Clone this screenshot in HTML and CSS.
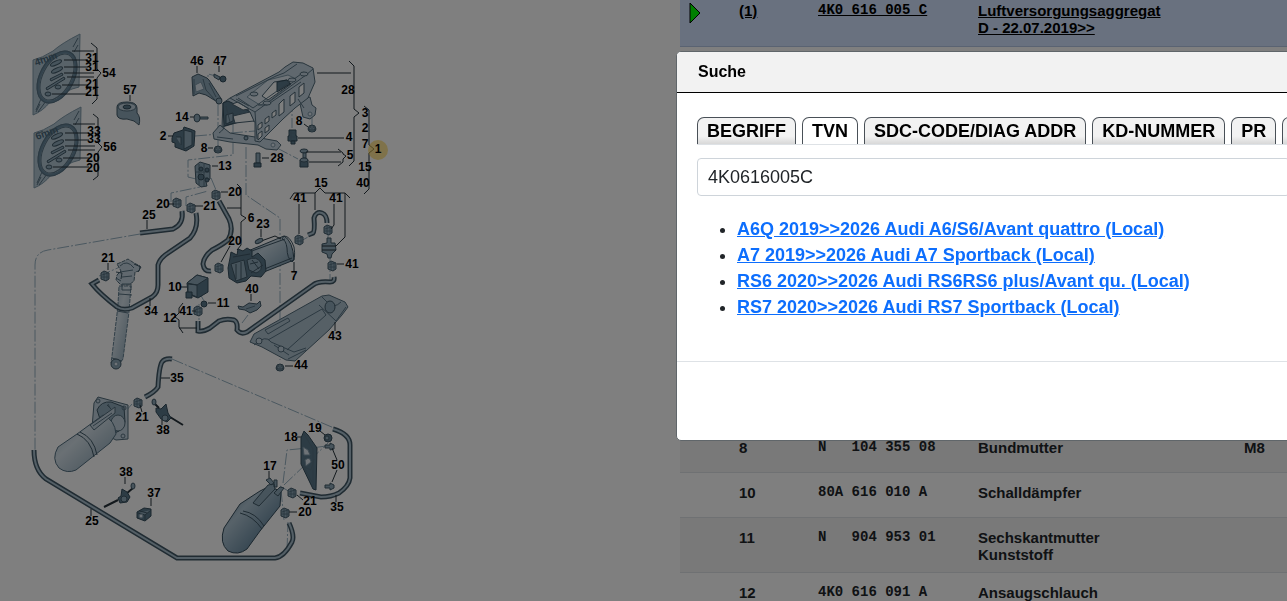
FILE: index.html
```html
<!DOCTYPE html>
<html lang="de">
<head>
<meta charset="utf-8">
<title>Teilekatalog</title>
<link rel="stylesheet" href="styles.css">
</head>
<body>
<main class="catalog">
<section class="drawing" aria-label="Teilezeichnung">
<svg class="parts" viewBox="0 0 680 601" role="img" aria-label="Luftversorgung">
<defs>
<linearGradient id="cyl" x1="0" y1="0" x2="1" y2="1"><stop offset="0" stop-color="#7793a5"/><stop offset=".35" stop-color="#c3d4df"/><stop offset=".65" stop-color="#9cb4c4"/><stop offset="1" stop-color="#5d7a8d"/></linearGradient>
<linearGradient id="tank" x1="0" y1="0" x2="1" y2="1"><stop offset="0" stop-color="#9db4c3"/><stop offset=".4" stop-color="#d5e1e9"/><stop offset="1" stop-color="#7f9bad"/></linearGradient>
<linearGradient id="darktank" x1="0" y1="0" x2="1" y2="1"><stop offset="0" stop-color="#5d7a8d"/><stop offset=".35" stop-color="#afc5d3"/><stop offset=".7" stop-color="#6f8fa5"/><stop offset="1" stop-color="#4a677a"/></linearGradient>
<g id="clip"><path d="M-4-3L-1-5L4-3L4 3L1 5L-4 3Z" class="mid"/><path d="M-3-1L3-3M-4 1L4 1M-1-5V4M2-4V4" class="thin"/></g>
<g id="nut"><ellipse cx="0" cy="1" rx="4" ry="3" class="mid"/><path d="M-3-2L0-3L3-2V2H-3Z" class="mid"/><ellipse cx="0" cy="-1" rx="2" ry="1" class="light"/></g>
<g id="bag">
<path d="M33 60Q42 58 53 51Q62 43 80 34L79 87Q65 90 50 102Q43 111 33 115Z" class="foil"/>
<path d="M73 47L78 38M74 52L78 45M36 110L41 99M38 112L46 101M40 104L36 112M38 60L42 58" class="thin"/>
<ellipse cx="57" cy="77" rx="16" ry="27" transform="rotate(28 57 77)" class="ring"/>
<ellipse cx="57" cy="77" rx="17" ry="28" transform="rotate(28 57 77)" class="thin"/>
<ellipse cx="57" cy="77" rx="14" ry="25" transform="rotate(28 57 77)" class="thin"/>
<g class="mid"><ellipse cx="56" cy="63" rx="6" ry="2" transform="rotate(-25 56 63)"/><ellipse cx="57" cy="70" rx="6" ry="2" transform="rotate(-25 57 70)"/><path d="M50 79L62 73L63 75L51 81ZM46 88L64 77L65 79L47 90Z"/><ellipse cx="58" cy="87" rx="3" ry="2"/><ellipse cx="48" cy="94" rx="3" ry="2"/></g>
<path d="M72 51H94M64 60H88M64 67H88M64 73H94M67 77H94M62 85H88M52 94H88" class="line"/>
</g>
<g id="hoses">
<path d="M140 233L173 229Q184 224 182 211"/>
<path d="M99 280L92 284Q100 294 117 307Q123 311 132 308L152 297Q158 293 158 285L158 265Q160 258 168 253L190 238Q199 228 196 213"/>
<path d="M219 201L229 219Q234 230 228 240Q222 245 212 250Q204 256 203 264Q204 272 211 271"/>
<path d="M308 235L313 233Q315 231 314 218Q316 211 322 213Q327 215 327 223"/>
<path d="M198 321V331Q203 332 210 328L219 321Q226 318 234 320Q238 322 237 330Q241 335 247 332L313 285Q318 281 330 282Q335 282 334 277"/>
<path d="M172 359Q165 358 162 362Q159 367 158 387Q155 392 145 397"/>
<path d="M34 450Q34 470 46 479L177 558H275Q284 557 292 542Q295 536 289 523"/>
<path d="M300 493L321 497Q331 497 339 493Q349 486 350 478V445Q350 434 333 429"/>
</g>
</defs>

<g class="guide">
<path d="M140 234L48 250Q35 252 35 265V450M172 359L334 428M218 104V150M222 117H233V155L188 160V177L204 181M195 136L255 131M246 147V195L280 218V360M171 202V193L200 187M186 206V197L208 191M211 178L216 190M277 148L298 159M292 100V128M312 113V126M228 268H235M297 243L310 236M328 227V238M330 256V283M198 290L204 301M199 304V320M248 315L242 323M99 276L120 267M132 404L125 412M287 550L288 522M281 490L284 520M280 486L290 492M284 485L328 443M283 483L287 450L308 448M312 448L326 446M208 91V74L216 76"/>
</g>

<use href="#bag"/>
<use href="#bag" x="1" y="73"/>
<text class="bagtext" transform="translate(36 66) rotate(-20)">4mm</text>
<text class="bagtext" transform="translate(37 140) rotate(-20)">6mm</text>

<!-- tape roll -->
<path d="M117 107Q117 102 127 102Q137 102 137 108V113Q141 117 139 125Q135 120 127 119Q118 120 117 115Z" class="mid"/>
<ellipse cx="127" cy="107" rx="9" ry="4" class="light"/><ellipse cx="127" cy="107" rx="4" ry="2" class="deep"/>

<!-- mount 46, screw 47, screw 14 -->
<path d="M192 77L198 74L207 78L209 80L222 100L219 103L206 95L199 93L193 96Z" class="mid"/>
<path d="M195 85L201 82L204 89L196 92Z" class="pale"/><path d="M203 79L206 90L215 100M194 79V94M209 83L216 97" class="thin"/><ellipse cx="219" cy="101" rx="3" ry="3" class="mid"/>
<path d="M214 74L220 77L219 80L214 77Z" class="mid"/><ellipse cx="223" cy="79" rx="3" ry="3" class="deep"/>
<path d="M200 117H208V119H200Z" class="mid"/><ellipse cx="197" cy="118" rx="3" ry="4" class="mid"/>

<!-- relay 2 -->
<path d="M174 133L183 130L184 127L190 129L195 131L194 146L186 151L175 147V143L172 142V138Z" class="deep"/><path d="M184 130V149L192 145V132ZM176 137H181V145" class="mid"/>

<!-- compressor bracket -->
<path d="M213 133L220 125L230 133L255 137L277 141L281 145L277 150L266 149L258 145L230 142L214 139Z" class="light"/>
<path d="M299 100L310 97L312 105L316 108L315 115L310 119L303 117L301 108Z" class="light"/>
<path d="M223 103L230 98L279 72L285 67L293 62L303 63L313 68L315 82L308 98L295 108L283 119L260 142L255 141V122L250 119L222 127Z" class="light"/>
<path d="M223 103L228 101L249 111L252 118L224 126Z" class="deep"/><path d="M232 104L243 110L249 109L238 102Z" class="void"/><path d="M233 116L250 112L254 121L235 123Z" class="void"/><path d="M226 115L233 113V121L226 124Z" class="mid"/>
<path d="M247 97L268 80L288 75L296 79L291 84L268 102L260 105Z" class="pale"/>
<path d="M262 96L274 82L287 80L291 84L268 100Z" class="void"/><path d="M277 82L287 80L290 84L277 92Z" class="deep"/>
<path d="M230 98L255 112L306 75L313 69M255 112L257 139M238 98L253 108L304 72M236 96L276 76L284 73L297 64M258 105L267 105L301 82" class="thin"/>
<g class="void"><path d="M258 125L262 122V127L258 130ZM258 134L262 131V136L258 140ZM265 119L269 116V121L265 124ZM265 128L269 125V130L265 133ZM272 113L276 110V115L272 118ZM279 104L284 99V112L279 116ZM290 96L295 92V102L290 106ZM299 87L304 83V93L299 97Z"/></g>
<g class="light"><ellipse cx="292" cy="80" rx="4" ry="2"/><ellipse cx="267" cy="103" rx="4" ry="2"/><ellipse cx="254" cy="94" rx="4" ry="2"/><ellipse cx="304" cy="74" rx="4" ry="2"/></g>
<circle cx="246" cy="138" r="2" class="mid"/><circle cx="273" cy="145" r="2" class="pale"/><circle cx="310" cy="114" r="2" class="pale"/>
<path d="M219 133Q225 129 224 125M217 137L233 139M298 99L304 108M226 106L230 122M236 99L249 106" class="thin"/>

<use href="#nut" x="218" y="149"/><use href="#nut" x="312" y="128"/>
<path d="M289 130L296 130V136H297V141H288V136H289Z" class="deep"/><path d="M289 133H296M289 137H296M291 131V142" class="thin"/><path d="M291 141H295V144H291Z" class="deep"/>
<ellipse cx="304" cy="151" rx="4" ry="2" class="mid"/><path d="M303 153H306V158H303Z" class="mid"/><path d="M300 160H308V167H300Z" class="deep"/><ellipse cx="304" cy="160" rx="4" ry="2" class="mid"/>
<path d="M256 153H260V163H256Z" class="mid"/><path d="M254 163H261V167H254Z" class="deep"/>

<!-- valve block 13 -->
<path d="M195 166L200 162L210 165V179L206 182L207 186L201 187L196 183Z" class="mid"/><path d="M199 164V185M204 164V187M196 172H210M199 178H208" class="thin"/><circle cx="201" cy="169" r="2" class="deep"/><circle cx="207" cy="170" r="2" class="deep"/><circle cx="201" cy="177" r="3" class="deep"/><circle cx="207" cy="180" r="2" class="deep"/>
<use href="#clip" x="216" y="195"/><use href="#clip" x="177" y="203"/><use href="#clip" x="191" y="208"/><use href="#clip" x="219" y="268"/><use href="#clip" x="299" y="240"/><use href="#clip" x="328" y="230"/><use href="#clip" x="332" y="266"/><use href="#clip" x="198" y="311"/><use href="#clip" x="105" y="276"/><use href="#clip" x="138" y="403"/><use href="#clip" x="292" y="493"/><use href="#clip" x="285" y="513"/>

<!-- compressor 7 -->
<path d="M248 251L284 236Q293 241 294 260L259 274Z" fill="url(#cyl)" stroke="#344c5b"/>
<path d="M284 236Q290 236 294 247Q296 260 292 262Q287 258 287 248Q286 240 282 239ZM249 252L285 239M262 270L292 258" class="edge"/>
<path d="M230 258L231 252L237 255L238 249L243 251L247 248L252 251L252 257L258 253L265 260L266 271L261 277L251 276L246 281L237 283L229 278L228 268Z" class="deep"/>
<path d="M231 264L244 260L247 277L236 281ZM247 260Q257 255 261 263Q263 271 256 273L249 270ZM233 257L250 254M236 264V279M241 262V280M252 260L259 269M250 264L258 262M251 273L263 265" class="mid"/>
<path d="M258 239Q259 243 264 240L275 236L281 239" class="line"/><ellipse cx="259" cy="241" rx="4" ry="2" transform="rotate(-25 259 241)" class="mid"/>

<!-- filter 15 -->
<path d="M327 238H331V243H335L336 250L332 254L331 258H328L327 254L322 252V244L327 243Z" class="mid"/><path d="M322 246H336M322 250H336" class="line"/>

<!-- box 10 -->
<path d="M187 283L197 275L208 278V292L198 298L188 294Z" class="deep"/><path d="M187 283L197 275L208 278L197 285ZM188 284L197 285V297L188 293Z" class="mid"/><path d="M186 292H192V298H186Z" class="deep"/>
<circle cx="204" cy="304" r="3" class="deep"/>
<path d="M238 306L243 307L249 303L257 304L260 301L261 306L257 310L250 313L245 310L239 309Z" class="mid"/><path d="M246 309L255 306" class="thin"/>

<!-- shield 43 -->
<path d="M250 342L254 334L322 296L329 295L345 302L348 307L342 315L329 330L306 351L295 361L286 360L262 347Z" class="plate"/>
<path d="M254 345Q266 334 271 342L294 352L306 348M265 330L288 318L290 321L268 334ZM268 340L322 309L326 315L287 350M319 305L336 321L346 307M322 297L328 303Q334 309 341 302M274 345L289 355M288 359L306 350" class="thin"/><ellipse cx="330" cy="307" rx="5" ry="6" class="mid"/><circle cx="281" cy="349" r="3" class="light"/><circle cx="259" cy="341" r="3" class="light"/>
<use href="#nut" x="280" y="367"/>

<!-- strut -->
<g stroke-dasharray="4 1"><path d="M119 286H131L129 312L123 359L117 367L111 363L112 356L117 314L118 304Z" fill="url(#tank)" stroke="#637f91"/><path d="M117 264L124 261L128 259L134 263L140 266L139 271L135 272L134 281L129 285H121L116 280L117 275L121 271Z" class="light"/></g><path d="M122 284H131V290H122ZM119 294L132 295M117 311L128 313M120 266Q127 259 134 268M120 272L133 270M122 277L132 276M116 278L121 281M112 358L122 361" class="thin"/><circle cx="116" cy="364" r="5" class="mid"/><circle cx="116" cy="364" r="2" class="pale"/><path d="M134 264L141 267L138 272M116 272L122 273L121 279" class="edge"/>

<use href="#hoses" class="hose-edge"/><use href="#hoses" class="hose-core"/>

<!-- tank at left -->
<path d="M94 403L98 397L128 405V439L116 440L92 428Z" class="light"/><path d="M97 410Q101 401 111 402L124 407L125 422L119 431L106 437Z" class="mid"/><circle cx="98" cy="401" r="2" class="thin"/><circle cx="124" cy="408" r="2" class="thin"/><circle cx="123" cy="436" r="2" class="thin"/>
<ellipse cx="118" cy="423" rx="7" ry="8" class="light"/>
<path d="M58 447L77 434L103 415Q115 420 116 434L110 443L76 470Q67 474 59 468Q51 459 58 447Z" fill="url(#tank)" stroke="#526e80"/><path d="M77 434Q91 440 94 457M80 432Q94 438 97 455" class="edge"/><path d="M90 425L111 410L115 407V413L94 430ZM107 405L111 409" class="light"/><path d="M93 426L112 413M108 404L110 408" class="thin"/>

<!-- tank 17 -->
<path d="M224 528L240 504L260 491L270 486L281 492L280 506L260 531L247 549Q238 556 228 551Q219 543 224 528Z" fill="url(#darktank)" stroke="#344c5b"/><path d="M240 513Q253 516 262 529M243 511Q256 513 264 526" class="edge"/><path d="M253 503L268 485L274 484L275 489L259 506ZM274 493L280 487L284 488L278 496ZM266 480L270 478L274 483L271 485ZM274 480H277V487H274Z" class="mid"/>

<!-- bracket 18 -->
<path d="M301 438L304 431L308 435L317 448L316 490L313 489L301 464Z" class="deep"/><path d="M303 447L308 450L310 455L304 455ZM305 460Q310 456 311 462L306 466Z" class="pale"/><path d="M304 467L311 470L314 459M304 434L313 449V486M303 465L312 482" class="thin"/>
<circle cx="328" cy="438" r="4" class="deep"/><circle cx="327" cy="438" r="2" class="mid"/>
<path d="M325 445H330V443L334 445V449L330 450V448H325ZM325 485H330V483L334 485V488L330 490V488H325Z" class="mid"/>

<!-- sensors 38, connector 37 -->
<path d="M153 402L159 408M170 417L183 425M133 488L126 494M118 500L104 507" class="cable"/><path d="M156 408L161 409L166 404L168 413L171 418L167 422L161 419L156 412ZM122 489L127 492L130 497L127 502L120 503L118 498L121 496Z" class="deep"/><circle cx="165" cy="418" r="3" class="mid"/><circle cx="124" cy="499" r="3" class="mid"/><ellipse cx="154" cy="402" rx="2" ry="3" class="mid"/><ellipse cx="133" cy="486" rx="2" ry="3" class="mid"/>
<path d="M137 512L144 508L151 509V516L145 521L137 518Z" class="deep"/><path d="M138 513L145 515L151 510M145 515V520M140 511L147 513" class="mid"/><circle cx="141" cy="516" r="2" class="pale"/>

<!-- leader lines and brackets -->
<path class="line" d="M91 43L97 48V69L101 73L97 78V99L92 104M93 114L98 118V143L102 147L98 152V176L93 180M130 95V101M197 66V73M219 66V72M190 117H194M168 136H173M208 148H213M317 73H351M349 61L354 66V109L359 113L354 117V161L349 166M364 106L369 110V145L374 149L369 153V189L364 194M298 138H344M304 124L308 127M306 152H341M309 162H341M338 149L343 153V154L346 156L343 159V162L338 166M262 158H269M212 166H218M290 199L294 193H315L320 188L325 193H345L350 198M299 204V234M315 193V210M334 204V225L331 229M345 193V237L336 246M221 192H228M237 184L241 188V215L246 218L241 222V245L237 250M227 208H241M169 204H174M195 206H203M147 220V229M261 229V237M230 246L221 262M108 263V270M337 264H344M294 262V271M181 287H187M251 294V301M208 303H216M192 311H196M183 303L179 308V313L175 317L179 320V327L183 333M179 328H197M150 298V306M335 322V331M285 366H293M161 378H170M140 405L142 412M162 420V425M320 431L325 435M297 437H301M269 471V478M332 448L337 460M337 470L332 482M125 477V484M151 498V506M297 495L303 500M289 512H297M336 495V502M91 509V516"/>
<circle cx="378" cy="150" r="10" class="spot"/>

<g class="labels">
<text x="92" y="62">31</text><text x="92" y="71">31</text><text x="109" y="77">54</text><text x="92" y="88">21</text><text x="92" y="96">21</text><text x="130" y="94">57</text><text x="197" y="65">46</text><text x="220" y="65">47</text><text x="182" y="121">14</text><text x="163" y="140">2</text><text x="204" y="152">8</text><text x="348" y="94">28</text><text x="299" y="125">8</text><text x="365" y="117">3</text><text x="365" y="132">2</text><text x="365" y="148">7</text><text x="378" y="153">1</text><text x="349" y="141">4</text><text x="350" y="159">5</text><text x="277" y="162">28</text><text x="225" y="170">13</text><text x="365" y="171">15</text><text x="363" y="187">40</text>
<text x="94" y="135">33</text><text x="94" y="143">33</text><text x="110" y="151">56</text><text x="93" y="162">20</text><text x="93" y="172">20</text><text x="321" y="187">15</text><text x="300" y="202">41</text><text x="336" y="202">41</text><text x="235" y="196">20</text><text x="163" y="208">20</text><text x="210" y="210">21</text><text x="149" y="219">25</text><text x="251" y="222">6</text><text x="263" y="228">23</text><text x="235" y="245">20</text><text x="108" y="262">21</text><text x="352" y="268">41</text><text x="294" y="280">7</text><text x="175" y="291">10</text><text x="252" y="293">40</text><text x="223" y="307">11</text><text x="186" y="315">41</text><text x="170" y="322">12</text><text x="151" y="315">34</text><text x="335" y="340">43</text><text x="301" y="369">44</text>
<text x="177" y="382">35</text><text x="142" y="421">21</text><text x="163" y="434">38</text><text x="315" y="432">19</text><text x="291" y="441">18</text><text x="270" y="470">17</text><text x="338" y="469">50</text><text x="126" y="476">38</text><text x="154" y="497">37</text><text x="310" y="505">21</text><text x="305" y="516">20</text><text x="337" y="511">35</text><text x="92" y="525">25</text>
</g>
</svg>
</section>

<section class="list">
<table class="parts-table">
<colgroup><col class="c-mark"><col class="c-pos"><col class="c-number"><col class="c-name"><col></colgroup>
<tbody>
<tr class="selected"><td><svg class="marker" viewBox="0 0 12 22" aria-hidden="true"><path d="M1 1L11 11L1 21Z"/></svg></td><td><a href="#p1">(1)</a></td><td class="number"><a href="#p1">4K0 616 005 C</a></td><td><a href="#p1">Luftversorgungsaggregat<br>D - 22.07.2019&gt;&gt;</a></td><td></td></tr>
<tr class="spacer"><td colspan="5"></td></tr>
<tr class="odd"><td></td><td>8</td><td class="number">N   104 355 08</td><td>Bundmutter</td><td>M8</td></tr>
<tr><td></td><td>10</td><td class="number">80A 616 010 A</td><td>Schalldämpfer</td><td></td></tr>
<tr class="odd"><td></td><td>11</td><td class="number">N   904 953 01</td><td>Sechskantmutter<br>Kunststoff</td><td></td></tr>
<tr><td></td><td>12</td><td class="number">4K0 616 091 A</td><td>Ansaugschlauch</td><td></td></tr>
</tbody>
</table>
</section>
</main>

<div class="backdrop">
<div class="dialog" role="dialog" aria-labelledby="dialog-title">
<header class="dialog-header"><h1 class="dialog-title" id="dialog-title">Suche</h1></header>
<div class="dialog-body">
<div class="tabs" role="tablist">
<button class="tab" role="tab">BEGRIFF</button>
<button class="tab active" role="tab" aria-selected="true">TVN</button>
<button class="tab" role="tab">SDC-CODE/DIAG ADDR</button>
<button class="tab" role="tab">KD-NUMMER</button>
<button class="tab" role="tab">PR</button>
<button class="tab more" role="tab" aria-label="Weitere"></button>
</div>
<input class="query" type="text" aria-label="TVN" value="4K0616005C">
<ul class="results">
<li><a href="#a6q">A6Q 2019&gt;&gt;2026 Audi A6/S6/Avant quattro (Local)</a></li>
<li><a href="#a7">A7 2019&gt;&gt;2026 Audi A7 Sportback (Local)</a></li>
<li><a href="#rs6">RS6 2020&gt;&gt;2026 Audi RS6RS6 plus/Avant qu. (Local)</a></li>
<li><a href="#rs7">RS7 2020&gt;&gt;2026 Audi RS7 Sportback (Local)</a></li>
</ul>
</div>
<footer class="dialog-footer"></footer>
</div>
</div>
</body>
</html>
```
FILE: styles.css
```css
* { box-sizing: border-box; }
body {
  margin: 0;
  height: 100vh;
  overflow: hidden;
  background: #fff;
  color: #212529;
  font-family: "Liberation Sans", Arial, sans-serif;
}
.catalog {
  display: grid;
  grid-template-columns: 680fr 607fr;
  height: 100vh;
  overflow: hidden;
}
.drawing, .list { min-width: 0; overflow: hidden; }

/* exploded drawing */
.parts { display: block; width: 100%; }
.labels { font-size: 12px; font-weight: bold; text-anchor: middle; fill: #000; }
.bagtext { font-size: 10px; font-weight: bold; fill: #4b687a; }
.foil { fill: #b3c6d2; stroke: #7e98a8; }
.plate { fill: #acc0cd; stroke: #526b7a; }
.light { fill: #c0d1dc; stroke: #526b7a; }
.pale { fill: #dce7ee; stroke: #7d96a6; }
.mid { fill: #8fa9b9; stroke: #405867; }
.deep { fill: #5b788a; stroke: #344c5b; }
.void { fill: #fafcfd; stroke: #4a6271; }
.ring { fill: none; stroke: #67869b; stroke-width: 3; }
.thin { fill: none; stroke: #587282; stroke-width: 1; }
.edge { fill: none; stroke: #3e5665; stroke-width: 1; }
.line { fill: none; stroke: #26323a; stroke-width: 1; }
.cable { fill: none; stroke: #26323a; stroke-width: 2; }
.guide { fill: none; stroke: #96b0c0; stroke-width: 1; stroke-dasharray: 12 2 2 2; }
.hose-edge { fill: none; stroke: #405765; stroke-width: 5; }
.hose-core { fill: none; stroke: #a9bfcc; stroke-width: 2; }
.spot { fill: #ffd34d; fill-opacity: .6; }

/* parts list */
.parts-table {
  width: 100%;
  table-layout: fixed;
  border-collapse: separate;
  border-spacing: 0;
  font-size: 15px;
  font-weight: bold;
  line-height: 17px;
}
.c-mark { width: 59px; }
.c-pos { width: 79px; }
.c-number { width: 160px; }
.c-name { width: 266px; }
.parts-table td {
  height: 45px;
  padding: 11px 0 9px;
  border-bottom: 1px solid #dee2e6;
  vertical-align: top;
}
.parts-table .number { font-family: "Liberation Mono", monospace; font-size: 14px; white-space: pre; }
.odd td { background: #f2f2f2; }
.parts-table .selected td { height: 47px; padding: 2px 0 10px; background: #d2e2ff; border-color: #b4c6e4; }
.selected, .selected a { color: #000; }
.parts-table .spacer td { height: 381px; padding: 0; }
.marker { display: block; width: 12px; height: 22px; margin-left: 9px; fill: #0f0; stroke: #000; }

/* search dialog */
.backdrop {
  position: fixed;
  inset: 0;
  display: grid;
  grid-template-columns: 676fr 611fr;
  align-items: start;
  overflow: hidden;
  background: rgba(0, 0, 0, .5);
}
.dialog {
  grid-column: 2;
  min-width: 0;
  margin: 51px -24px 0 0;
  overflow: hidden;
  border: 1px solid #60666a;
  border-radius: 5px;
  background: #fff;
}
.dialog-header { padding: 10px 21px; border-bottom: 1px solid #000; background: #f2f2f2; }
.dialog-title { margin: 0; color: #000; font-size: 16px; line-height: 20px; }
.dialog-body { padding: 24px 20px 41px; }
.tabs { display: flex; gap: 6px; border-bottom: 1px solid #dee2e6; }
.tab {
  flex: none;
  padding: 0 9px;
  border: 1px solid #495057;
  border-bottom: 0;
  border-radius: 7px 7px 0 0;
  background: linear-gradient(#f2f2f2 70%, #d8d8d8);
  color: #000;
  font: bold 18px/26px "Liberation Sans", Arial, sans-serif;
}
.tab.active { background: #fff; }
.tab.more { width: 60px; }
.query {
  display: block;
  width: 100%;
  height: 38px;
  margin-top: 13px;
  padding: 0 10px;
  border: 1px solid #ced4da;
  border-radius: 4px;
  color: #212529;
  font: 18px "Liberation Sans", Arial, sans-serif;
}
.results {
  margin: 20px 0 0;
  padding-left: 40px;
  color: #212529;
  font-size: 18px;
  font-weight: bold;
  line-height: 26px;
}
.results a { color: #0d6efd; }
.dialog-footer { height: 79px; border-top: 1px solid #dee2e6; }
```
